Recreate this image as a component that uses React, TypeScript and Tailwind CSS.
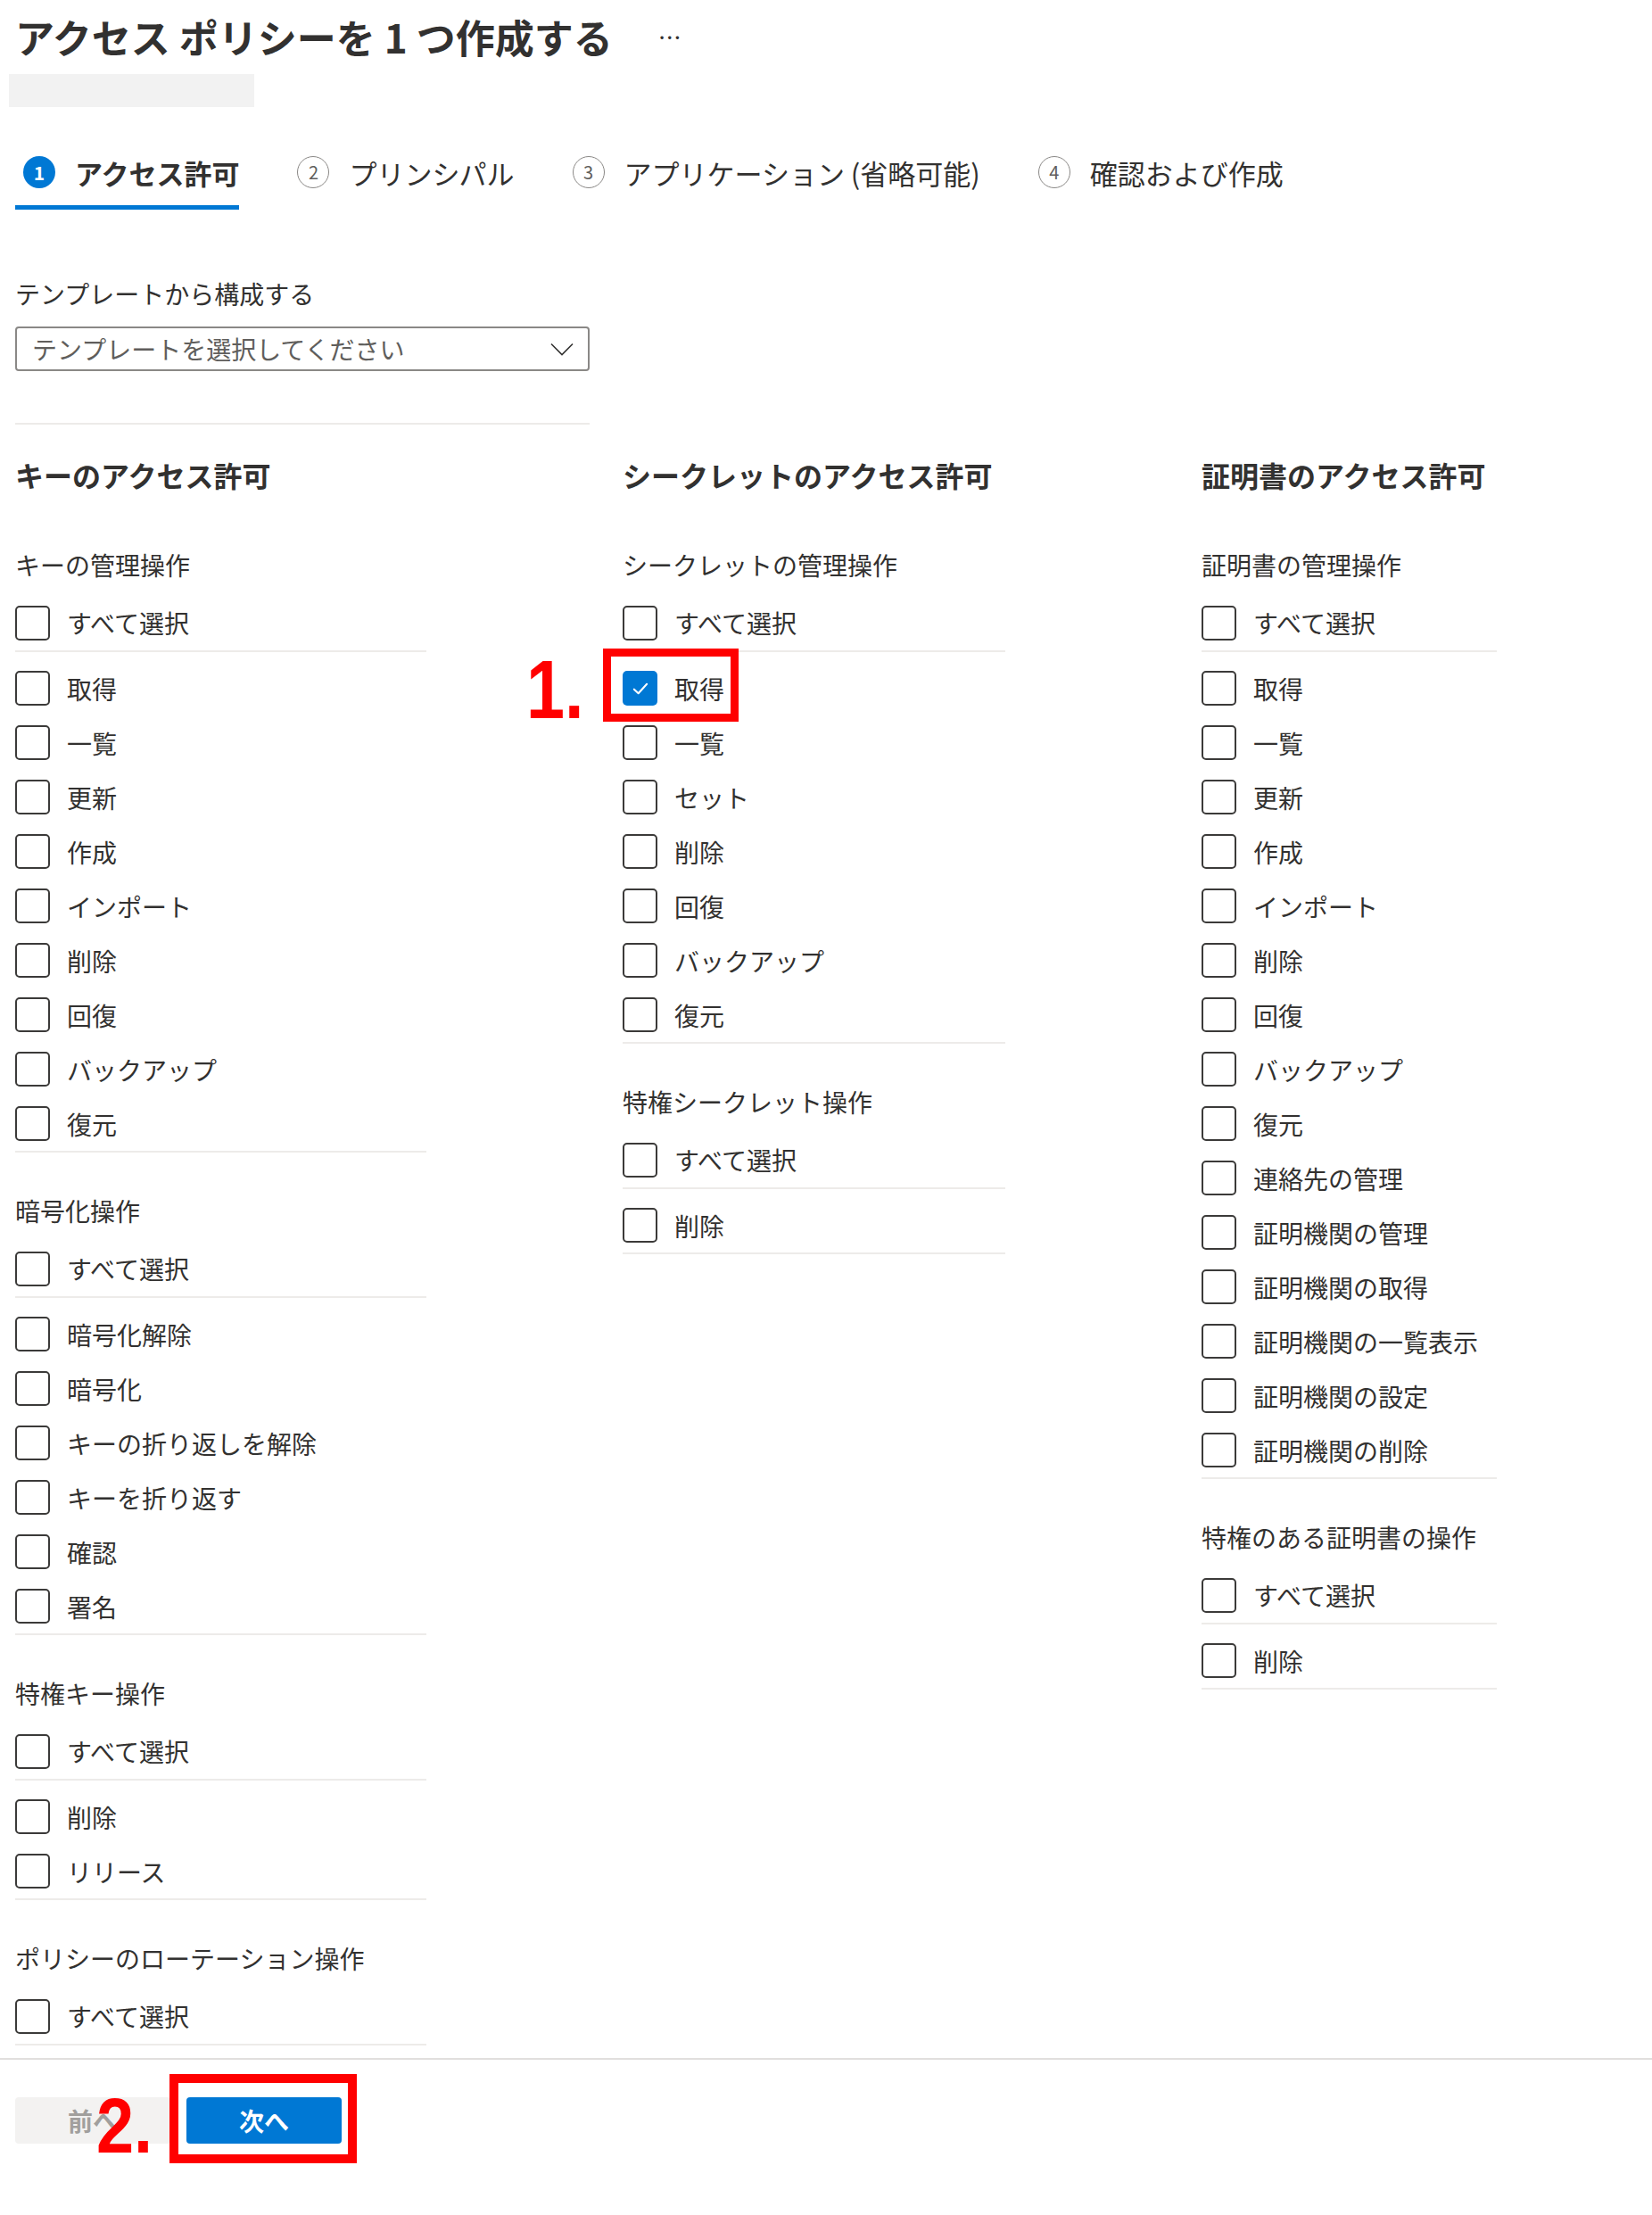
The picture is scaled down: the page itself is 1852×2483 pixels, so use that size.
import React from "react";

type Item = { label: string; checked?: boolean; mark?: boolean };
type Group = { title: string; items: Item[] };
type Column = { title: string; width: string; groups: Group[] };

const Box = ({ checked }: { checked?: boolean }) =>
  checked ? (
    <div className="w-[39px] h-[39px] shrink-0 rounded-[5px] bg-[#0078d4] flex items-center justify-center">
      <svg width="26" height="26" viewBox="0 0 20 20" fill="none">
        <path d="M4.5 10.5 L8.2 14 L15.5 6" stroke="white" strokeWidth="1.6" strokeLinecap="round" strokeLinejoin="round" />
      </svg>
    </div>
  ) : (
    <div className="w-[39px] h-[39px] shrink-0 rounded-[5px] border-2 border-[#3b3a39] bg-white" />
  );

const Row = ({ item, className }: { item: Item; className?: string }) => (
  <div className={"relative flex items-center gap-[19px] " + (className ?? "h-[61px]")}>
    <Box checked={item.checked} />
    <span className="text-[28px] leading-none text-[#323130] whitespace-nowrap">{item.label}</span>
    {item.mark && (
      <>
        <div className="absolute left-[-22px] top-[-14px] w-[152px] h-[82px] border-[9px] border-[#ff0000]" />
        <div className="absolute left-[-108px] top-[-14px] text-[92px] leading-none font-bold text-[#ff0000] font-['Liberation_Sans',sans-serif] scale-x-[0.84] origin-left">
          1.
        </div>
      </>
    )}
  </div>
);

const GroupView = ({ group, first }: { group: Group; first: boolean }) => (
  <div>
    <div className={(first ? "mt-[59px]" : "mt-[45px]") + " h-[40px] leading-[40px] text-[28px] text-[#323130] whitespace-nowrap"}>
      {group.title}
    </div>
    <div className="mt-[14px] border-b-2 border-[#edebe9]">
      <Row item={{ label: "すべて選択" }} className="h-[62px]" />
    </div>
    {group.items.length > 0 && (
      <div className="pt-[10px] border-b-2 border-[#edebe9]">
        {group.items.map((it, i) => (
          <Row key={i} item={it} />
        ))}
      </div>
    )}
  </div>
);

const L = (arr: string[]): Item[] => arr.map((label) => ({ label }));

const columns: Column[] = [
  {
    title: "キーのアクセス許可",
    width: "w-[461px]",
    groups: [
      { title: "キーの管理操作", items: L(["取得", "一覧", "更新", "作成", "インポート", "削除", "回復", "バックアップ", "復元"]) },
      { title: "暗号化操作", items: L(["暗号化解除", "暗号化", "キーの折り返しを解除", "キーを折り返す", "確認", "署名"]) },
      { title: "特権キー操作", items: L(["削除", "リリース"]) },
      { title: "ポリシーのローテーション操作", items: [] },
    ],
  },
  {
    title: "シークレットのアクセス許可",
    width: "w-[429px]",
    groups: [
      {
        title: "シークレットの管理操作",
        items: [{ label: "取得", checked: true, mark: true }, ...L(["一覧", "セット", "削除", "回復", "バックアップ", "復元"])],
      },
      { title: "特権シークレット操作", items: L(["削除"]) },
    ],
  },
  {
    title: "証明書のアクセス許可",
    width: "w-[331px]",
    groups: [
      {
        title: "証明書の管理操作",
        items: L([
          "取得",
          "一覧",
          "更新",
          "作成",
          "インポート",
          "削除",
          "回復",
          "バックアップ",
          "復元",
          "連絡先の管理",
          "証明機関の管理",
          "証明機関の取得",
          "証明機関の一覧表示",
          "証明機関の設定",
          "証明機関の削除",
        ]),
      },
      { title: "特権のある証明書の操作", items: L(["削除"]) },
    ],
  },
];

const tabs = [
  { n: "1", label: "アクセス許可", active: true },
  { n: "2", label: "プリンシパル" },
  { n: "3", label: "アプリケーション (省略可能)" },
  { n: "4", label: "確認および作成" },
];

export default function App() {
  return (
    <div className="w-[1852px] min-h-[2483px] bg-white text-[#323130] font-['Noto_Sans_CJK_JP','Noto_Sans',sans-serif]">
      {/* Title */}
      <div className="pl-[17px] pt-[13px] flex items-center h-[69px]">
        <h1 className="text-[44px] leading-[56px] font-semibold text-[#323130] whitespace-nowrap">
          アクセス ポリシーを 1 つ作成する
        </h1>
        <span className="ml-[51px] text-[26px] leading-none text-[#323130]">…</span>
      </div>
      {/* Breadcrumb placeholder */}
      <div className="ml-[10px] mt-[14px] w-[275px] h-[37px] bg-[#f2f2f2]" />

      {/* Tabs */}
      <div className="mt-[53px] pl-[17px] flex gap-[65px]">
        {tabs.map((t) => (
          <div
            key={t.n}
            className={
              "flex items-center gap-[22px] h-[40px] pb-[17px] border-b-[5px] box-content " +
              (t.active ? "pl-[9px] border-[#0078d4]" : "border-transparent")
            }
          >
            {t.active ? (
              <div className="w-[36px] h-[36px] rounded-full bg-[#0078d4] text-white flex items-center justify-center text-[21px] font-semibold leading-none">
                {t.n}
              </div>
            ) : (
              <div className="w-[36px] h-[36px] rounded-full border-[1.5px] border-[#8a8886] text-[#605e5c] flex items-center justify-center text-[20px] leading-none">
                {t.n}
              </div>
            )}
            <span className={"text-[31px] leading-none whitespace-nowrap " + (t.active ? "font-semibold text-[#323130]" : "text-[#323130]")}>
              {t.label}
            </span>
          </div>
        ))}
      </div>

      {/* Template */}
      <div className="pl-[17px]">
        <div className="mt-[74px] h-[40px] leading-[40px] text-[28px] text-[#323130]">テンプレートから構成する</div>
        <div className="mt-[17px] w-[644px] h-[50px] rounded-[4px] border-2 border-[#8a8886] flex items-center justify-between pl-[17px] pr-[16px]">
          <span className="text-[28px] leading-none text-[#605e5c]">テンプレートを選択してください</span>
          <svg width="26" height="15" viewBox="0 0 26 15" fill="none">
            <path d="M1 1.5 L13 13.5 L25 1.5" stroke="#323130" strokeWidth="1.6" />
          </svg>
        </div>
        <div className="mt-[58px] w-[644px] h-[2px] bg-[#edebe9]" />

        {/* Columns */}
        <div className="flex gap-[220px] items-start">
          {columns.map((c, ci) => (
            <div key={ci} className={c.width}>
              <div className="mt-[34px] h-[44px] leading-[44px] text-[32px] font-bold text-[#323130] whitespace-nowrap">{c.title}</div>
              {c.groups.map((g, gi) => (
                <GroupView key={gi} group={g} first={gi === 0} />
              ))}
            </div>
          ))}
        </div>
      </div>

      {/* Footer */}
      <div className="mt-[14px] border-t-2 border-[#e1dfdd]">
        <div className="relative pl-[17px] pt-[42px] pb-[80px] flex gap-[18px]">
          <div className="w-[174px] h-[52px] rounded-[4px] bg-[#f3f2f1] flex items-center justify-center text-[28px] font-bold text-[#a19f9d] leading-none">
            前へ
          </div>
          <div className="relative w-[174px] h-[52px] rounded-[4px] bg-[#0078d4] flex items-center justify-center text-[28px] font-bold text-white leading-none">
            次へ
            <div className="absolute left-[-19px] top-[-26px] w-[210px] h-[100px] border-[10px] border-[#ff0000]" />
          </div>
          <div className="absolute left-[108px] top-[30px] text-[88px] leading-none font-bold text-[#ff0000] font-['Liberation_Sans',sans-serif] scale-x-[0.86] origin-left">
            2.
          </div>
        </div>
      </div>
    </div>
  );
}
